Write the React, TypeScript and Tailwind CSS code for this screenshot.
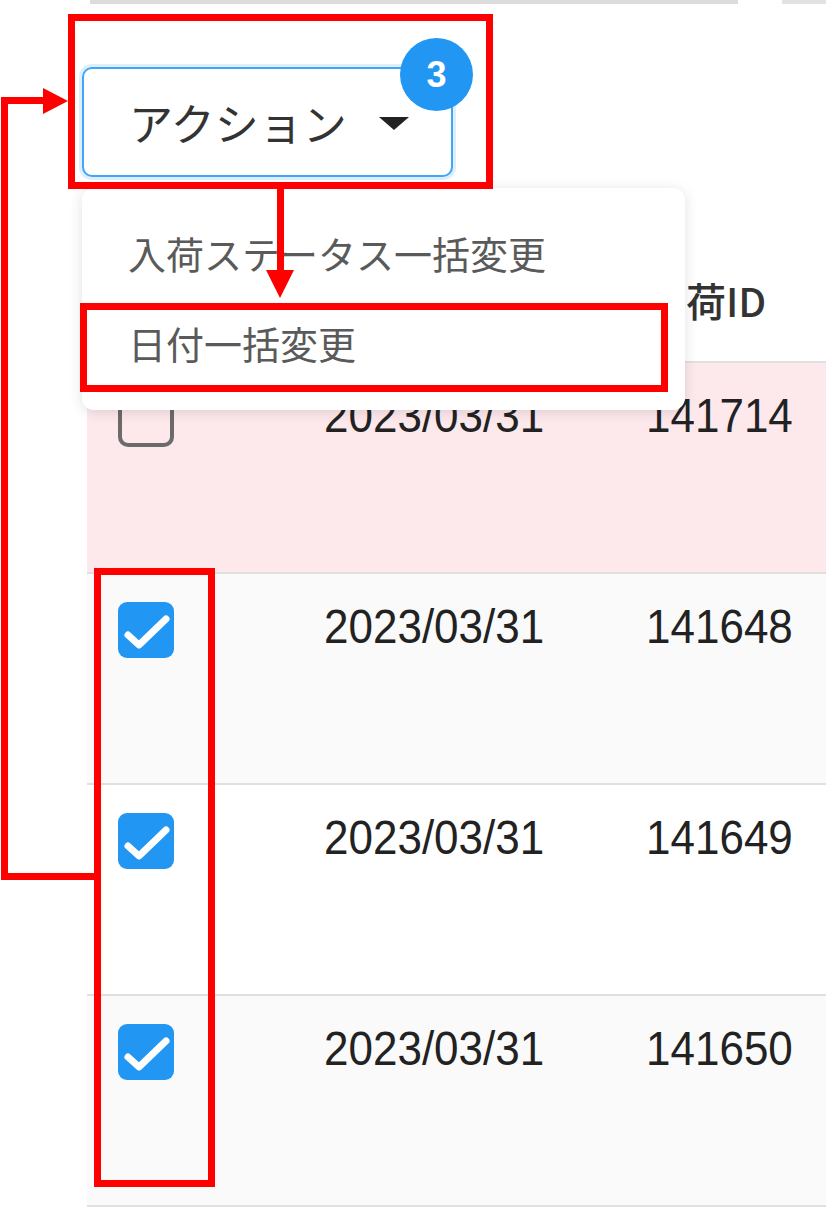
import React from "react";

type Row = { date: string; id: string; checked: boolean; bg: string };

const ROWS: Row[] = [
  { date: "2023/03/31", id: "141714", checked: false, bg: "bg-[#fde8ec]" },
  { date: "2023/03/31", id: "141648", checked: true, bg: "bg-[#fafafa]" },
  { date: "2023/03/31", id: "141649", checked: true, bg: "bg-white" },
  { date: "2023/03/31", id: "141650", checked: true, bg: "bg-[#fafafa]" },
];

const JP = { fontFamily: '"Noto Sans CJK JP", "Noto Sans", sans-serif' };
const NUM = { fontFamily: '"Liberation Sans", Arial, sans-serif' };

function Checkbox({ checked }: { checked: boolean }) {
  if (!checked) {
    return <div className="w-[56px] h-[56px] rounded-[10px] border-[4px] border-[#6b6b6b]" />;
  }
  return (
    <div className="w-[56px] h-[56px] rounded-[9px] bg-[#2196f3] flex items-center justify-center">
      <svg width="56" height="56" viewBox="0 0 56 56">
        <path d="M10 33 L21 43 L48 17" fill="none" stroke="#fff" strokeWidth="7" strokeLinecap="round" strokeLinejoin="round" />
      </svg>
    </div>
  );
}

// red annotation layer drawn over the page
function Annotations() {
  return (
    <svg className="absolute inset-0 z-20 pointer-events-none" width="826" height="1218" viewBox="0 0 826 1218">
      <g fill="none" stroke="#ff0000" strokeWidth="7">
        <rect x="71.5" y="17.5" width="418" height="168" />
        <rect x="83.5" y="306.5" width="581" height="82" />
        <rect x="97.5" y="571.5" width="114" height="612" />
      </g>
      <g fill="#ff0000">
        {/* left connector */}
        <rect x="1" y="97" width="7" height="783" />
        <rect x="1" y="97" width="44" height="7" />
        <rect x="1" y="873" width="96" height="7" />
        <polygon points="43,88 68,101 43,114" />
        {/* down arrow */}
        <rect x="277" y="186" width="7" height="86" />
        <polygon points="266,270 294,270 280,298" />
      </g>
    </svg>
  );
}

export default function App() {
  return (
    <div className="relative w-[826px] h-[1218px] bg-white overflow-hidden">
      {/* bottom edge of the card above */}
      <div className="flex h-[4px]">
        <div className="ml-[90px] w-[648px] bg-[#dcdcdc]" />
        <div className="ml-[44px] flex-1 bg-[#e2e2e2]" />
      </div>

      {/* action button + menu */}
      <div className="relative ml-[82px] mt-[63px] w-[371px] h-[110px]">
        <button
          className="w-full h-full rounded-[10px] border-2 border-[#42a5f5] bg-white shadow-[0_0_0_3px_rgba(66,165,245,0.18)] flex items-center pl-[45px] gap-[32px] text-[#333]"
          style={JP}
        >
          <span className="text-[44px] leading-none">アクション</span>
          <svg width="30" height="14" viewBox="0 0 30 14" className="mt-[4px]">
            <polygon points="0,0 30,0 15,13" fill="#222" />
          </svg>
        </button>
        <div className="absolute left-[318px] top-[-29px] w-[73px] h-[73px] rounded-full bg-[#2196f3] flex items-center justify-center">
          <span className="text-white text-[36px] font-bold leading-none" style={NUM}>3</span>
        </div>

        <div className="absolute left-0 top-[121px] w-[603px] h-[222px] bg-white rounded-[12px] shadow-[0_2px_14px_rgba(0,0,0,0.12)] pt-[20px] z-10" style={JP}>
          {["入荷ステータス一括変更", "日付一括変更"].map((t) => (
            <div key={t} className="h-[90px] flex items-center pl-[46px] text-[38px] leading-none text-[#5a5a5a]">
              {t}
            </div>
          ))}
        </div>
      </div>

      {/* table */}
      <div className="ml-[87px] mt-[10px]">
        <div className="h-[176px] border-b-2 border-[#e0e0e0] grid grid-cols-[237px_322px_1fr]">
          <div />
          <div />
          <div className="pt-[93px] text-[40px] leading-none text-[#333] font-medium" style={JP}>
            入荷ID
          </div>
        </div>
        {ROWS.map((r) => (
          <div key={r.id} className={`h-[211px] border-b-2 border-[#e0e0e0] grid grid-cols-[237px_322px_1fr] ${r.bg}`}>
            <div className="pl-[31px] pt-[28px]">
              <Checkbox checked={r.checked} />
            </div>
            <div className="pt-[26px] text-[44px] leading-none text-[#222] scale-y-110 origin-top" style={NUM}>
              {r.date}
            </div>
            <div className="pt-[26px] text-[44px] leading-none text-[#222] scale-y-110 origin-top" style={NUM}>
              {r.id}
            </div>
          </div>
        ))}
      </div>

      <Annotations />
    </div>
  );
}
